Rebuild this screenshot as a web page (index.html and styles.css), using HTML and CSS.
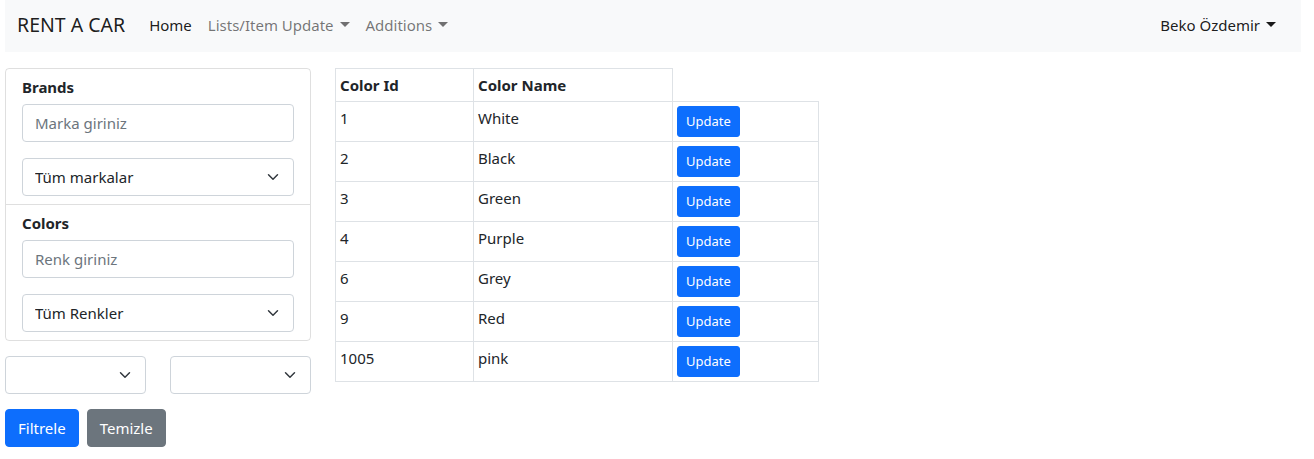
FILE: index.html
```html
<!DOCTYPE html>
<html lang="tr">
<head>
<meta charset="utf-8">
<title>Rent A Car</title>
<link rel="stylesheet" href="styles.css">
</head>
<body>
<div class="page">
  <nav class="navbar">
    <a class="brand" href="#">RENT A CAR</a>
    <ul class="nav">
      <li><a class="nav-link active" href="#">Home</a></li>
      <li><a class="nav-link dropdown" href="#">Lists/Item Update</a></li>
      <li><a class="nav-link dropdown" href="#">Additions</a></li>
    </ul>
    <div class="nav-right">
      <a class="nav-link active dropdown" href="#">Beko Özdemir</a>
    </div>
  </nav>

  <main class="main">
    <aside class="sidebar">
      <div class="card">
        <div class="card-item">
          <div class="section-title">Brands</div>
          <input class="form-control" type="text" placeholder="Marka giriniz">
          <select class="form-select"><option>Tüm markalar</option></select>
        </div>
        <div class="card-item">
          <div class="section-title">Colors</div>
          <input class="form-control" type="text" placeholder="Renk giriniz">
          <select class="form-select"><option>Tüm Renkler</option></select>
        </div>
      </div>
      <div class="select-row">
        <select class="form-select"><option></option></select>
        <select class="form-select"><option></option></select>
      </div>
      <div class="btn-row">
        <button class="btn btn-primary">Filtrele</button>
        <button class="btn btn-secondary">Temizle</button>
      </div>
    </aside>

    <section class="content">
      <table class="table">
        <colgroup>
          <col class="c1"><col class="c2"><col class="c3">
        </colgroup>
        <thead>
          <tr><th>Color Id</th><th>Color Name</th></tr>
        </thead>
        <tbody>
          <tr><td>1</td><td>White</td><td><button class="btn btn-primary btn-sm">Update</button></td></tr>
          <tr><td>2</td><td>Black</td><td><button class="btn btn-primary btn-sm">Update</button></td></tr>
          <tr><td>3</td><td>Green</td><td><button class="btn btn-primary btn-sm">Update</button></td></tr>
          <tr><td>4</td><td>Purple</td><td><button class="btn btn-primary btn-sm">Update</button></td></tr>
          <tr><td>6</td><td>Grey</td><td><button class="btn btn-primary btn-sm">Update</button></td></tr>
          <tr><td>9</td><td>Red</td><td><button class="btn btn-primary btn-sm">Update</button></td></tr>
          <tr><td>1005</td><td>pink</td><td><button class="btn btn-primary btn-sm">Update</button></td></tr>
        </tbody>
      </table>
    </section>
  </main>
</div>
</body>
</html>
```

FILE: styles.css
```css
* { box-sizing: border-box; }

html, body {
  margin: 0;
  padding: 0;
  background: #fff;
}

body {
  font-family: "Noto Sans", "Open Sans", sans-serif;
  font-size: 15px;
  line-height: 24px;
  color: #212529;
}

.page {
  padding: 0 13px 0 5px;
}

/* Navbar */
.navbar {
  display: flex;
  align-items: center;
  height: 52px;
  background: #f8f9fa;
  padding: 0 12px 2px;
}

.brand {
  font-size: 19.5px;
  line-height: 30px;
  color: rgba(0, 0, 0, .9);
  text-decoration: none;
  margin-right: 16px;
}

.nav {
  display: flex;
  list-style: none;
  margin: 0;
  padding: 0;
}

.nav-link {
  display: block;
  padding: 8px;
  color: rgba(0, 0, 0, .55);
  text-decoration: none;
}

.nav-link.active {
  color: rgba(0, 0, 0, .9);
}

.dropdown::after {
  content: "";
  display: inline-block;
  margin-left: 6px;
  vertical-align: 4px;
  border-top: 5px solid;
  border-right: 5px solid transparent;
  border-left: 5px solid transparent;
  border-bottom: 0;
}

.nav-right {
  margin-left: auto;
  margin-right: 5px;
}

/* Main */
.main {
  display: flex;
  align-items: flex-start;
  gap: 24px;
  margin-top: 16px;
}

.sidebar {
  width: 306px;
  flex: none;
}

.card {
  border: 1px solid rgba(0, 0, 0, .125);
  border-radius: 4px;
}

.card-item {
  padding: 8px 16px;
  display: flex;
  flex-direction: column;
  gap: 16px;
}

.card-item + .card-item {
  border-top: 1px solid rgba(0, 0, 0, .125);
}

.section-title {
  font-weight: 700;
  margin-top: -2px;
  margin-bottom: -11px;
}

.form-control,
.form-select {
  display: block;
  width: 100%;
  height: 38px;
  padding: 6px 12px;
  font-family: inherit;
  font-size: 15px;
  line-height: 24px;
  color: #212529;
  background-color: #fff;
  border: 1px solid #ced4da;
  border-radius: 4px;
  margin: 0;
}

.form-control::placeholder {
  color: #6c757d;
  opacity: 1;
}

.form-select {
  -webkit-appearance: none;
  appearance: none;
  padding-right: 36px;
  background-image: url("data:image/svg+xml,%3csvg xmlns='http://www.w3.org/2000/svg' viewBox='0 0 16 16'%3e%3cpath fill='none' stroke='%23343a40' stroke-linecap='round' stroke-linejoin='round' stroke-width='2' d='m2 5 6 6 6-6'/%3e%3c/svg%3e");
  background-repeat: no-repeat;
  background-position: right 12px center;
  background-size: 16px 12px;
}

.select-row {
  display: flex;
  gap: 24px;
  margin-top: 15px;
}

.select-row .form-select {
  flex: 1;
  min-width: 0;
}

.btn-row {
  display: flex;
  gap: 8px;
  margin-top: 15px;
}

.btn {
  display: inline-block;
  font-family: inherit;
  font-size: 15px;
  line-height: 24px;
  padding: 6px 12px;
  border: 1px solid transparent;
  border-radius: 4px;
  color: #fff;
  cursor: pointer;
}

.btn-primary {
  background: #0d6efd;
  border-color: #0d6efd;
}

.btn-secondary {
  background: #6c757d;
  border-color: #6c757d;
}

.btn-sm {
  display: block;
  font-size: 13px;
  line-height: 21px;
  padding: 4px 8px;
  border-radius: 3px;
}

/* Table */
.table {
  border-collapse: collapse;
  table-layout: fixed;
  width: 483px;
}

.c1 { width: 138px; }
.c2 { width: 199px; }
.c3 { width: 146px; }

.table th,
.table td {
  border: 1px solid #dee2e6;
  padding: 4px;
  text-align: left;
  vertical-align: top;
}

.table th {
  font-weight: 700;
}
```
